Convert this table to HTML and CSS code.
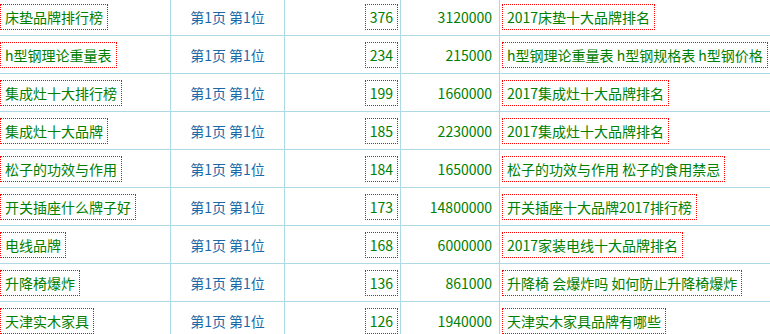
FILE: index.html
```html
<!DOCTYPE html>
<html lang="zh-CN">
<head>
<meta charset="utf-8">
<title>排行</title>
<link rel="stylesheet" href="styles.css">
</head>
<body>
<table class="rank">
  <tbody>
    <tr>
      <td class="c1"><span class="box kw">床垫品牌排行榜</span></td>
      <td class="c2"><span class="plain pos">第1页 第1位</span></td>
      <td class="c3"><span class="box kw">376</span></td>
      <td class="c4"><span class="plain kw">3120000</span></td>
      <td class="c5"><span class="box kw">2017床垫十大品牌排名</span></td>
    </tr>
    <tr>
      <td class="c1"><span class="box kw">h型钢理论重量表</span></td>
      <td class="c2"><span class="plain pos">第1页 第1位</span></td>
      <td class="c3"><span class="box kw">234</span></td>
      <td class="c4"><span class="plain kw">215000</span></td>
      <td class="c5"><span class="box kw">h型钢理论重量表 h型钢规格表 h型钢价格</span></td>
    </tr>
    <tr>
      <td class="c1"><span class="box kw">集成灶十大排行榜</span></td>
      <td class="c2"><span class="plain pos">第1页 第1位</span></td>
      <td class="c3"><span class="box kw">199</span></td>
      <td class="c4"><span class="plain kw">1660000</span></td>
      <td class="c5"><span class="box kw">2017集成灶十大品牌排名</span></td>
    </tr>
    <tr>
      <td class="c1"><span class="box kw">集成灶十大品牌</span></td>
      <td class="c2"><span class="plain pos">第1页 第1位</span></td>
      <td class="c3"><span class="box kw">185</span></td>
      <td class="c4"><span class="plain kw">2230000</span></td>
      <td class="c5"><span class="box kw">2017集成灶十大品牌排名</span></td>
    </tr>
    <tr>
      <td class="c1"><span class="box kw">松子的功效与作用</span></td>
      <td class="c2"><span class="plain pos">第1页 第1位</span></td>
      <td class="c3"><span class="box kw">184</span></td>
      <td class="c4"><span class="plain kw">1650000</span></td>
      <td class="c5"><span class="box kw">松子的功效与作用 松子的食用禁忌</span></td>
    </tr>
    <tr>
      <td class="c1"><span class="box kw">开关插座什么牌子好</span></td>
      <td class="c2"><span class="plain pos">第1页 第1位</span></td>
      <td class="c3"><span class="box kw">173</span></td>
      <td class="c4"><span class="plain kw">14800000</span></td>
      <td class="c5"><span class="box kw">开关插座十大品牌2017排行榜</span></td>
    </tr>
    <tr>
      <td class="c1"><span class="box kw">电线品牌</span></td>
      <td class="c2"><span class="plain pos">第1页 第1位</span></td>
      <td class="c3"><span class="box kw">168</span></td>
      <td class="c4"><span class="plain kw">6000000</span></td>
      <td class="c5"><span class="box kw">2017家装电线十大品牌排名</span></td>
    </tr>
    <tr>
      <td class="c1"><span class="box kw">升降椅爆炸</span></td>
      <td class="c2"><span class="plain pos">第1页 第1位</span></td>
      <td class="c3"><span class="box kw">136</span></td>
      <td class="c4"><span class="plain kw">861000</span></td>
      <td class="c5"><span class="box kw">升降椅 会爆炸吗 如何防止升降椅爆炸</span></td>
    </tr>
    <tr>
      <td class="c1"><span class="box kw">天津实木家具</span></td>
      <td class="c2"><span class="plain pos">第1页 第1位</span></td>
      <td class="c3"><span class="box kw">126</span></td>
      <td class="c4"><span class="plain kw">1940000</span></td>
      <td class="c5"><span class="box kw">天津实木家具品牌有哪些</span></td>
    </tr>
  </tbody>
</table>
</body>
</html>
```

FILE: styles.css
```css
html, body {
  margin: 0;
  padding: 0;
  background: #ffffff;
  overflow: hidden;
}

.rank {
  border-collapse: separate;
  border-spacing: 0;
  table-layout: fixed;
  width: 772px;
  margin: -2px 0 0 -2px;
  font-family: "Noto Sans CJK SC", "Liberation Sans", sans-serif;
}

.rank td {
  box-sizing: border-box;
  height: 38px;
  padding: 0 2px;
  border-right: 1px solid #add8e6;
  border-bottom: 1px solid #add8e6;
  vertical-align: middle;
  font-size: 0;
  line-height: 0;
  white-space: nowrap;
  overflow: hidden;
}

.rank .c1 { width: 173px; text-align: left; }
.rank .c2 { width: 114px; text-align: center; }
.rank .c3 { width: 116px; text-align: right; }
.rank .c4 { width: 99px; text-align: right; }
.rank .c5 { width: 270px; text-align: left; border-right: 0; padding-right: 0; }

.box,
.plain {
  display: inline-block;
  vertical-align: top;
  padding: 4px;
  font-size: 14px;
  line-height: 16px;
}

.box {
  border: 1px dotted #ff0000;
}

.plain {
  border: 1px solid transparent;
}

.kw {
  color: #008000;
}

.pos {
  color: #1a6aa8;
}
```
